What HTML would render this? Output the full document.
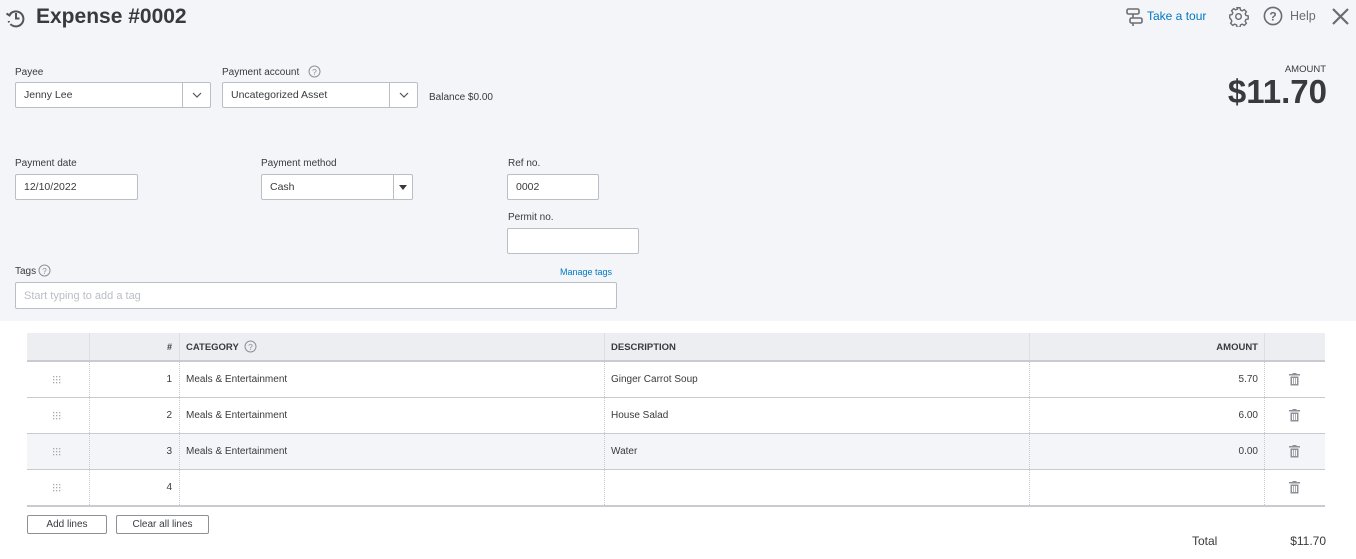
<!DOCTYPE html>
<html><head><style>
*{box-sizing:border-box;margin:0;padding:0}
body{width:1356px;height:559px;background:#fff;font-family:"Liberation Sans",Arial,sans-serif;color:#393a3d;position:relative;overflow:hidden}
.a{position:absolute}
.top{left:0;top:0;width:1356px;height:321px;background:#f4f5f8}
.lbl{font-size:10px;color:#393a3d}
.inp{background:#fff;border:1px solid #babec5;border-radius:2px;font-size:10.5px;padding-left:8px;display:flex;align-items:center}
.dd{position:absolute;right:0;top:0;bottom:0;width:28px;border-left:1px solid #babec5;display:flex;align-items:center;justify-content:center}
.cell{position:absolute;font-size:10px;color:#393a3d}
.vl{position:absolute;border-left:1px dotted #c8c8c8;top:361px;height:144px}
.hl{position:absolute;left:27px;width:1298px;border-top:1px solid #c8cbd0}
.btn{position:absolute;height:19px;border:1px solid #8d9096;border-radius:2px;font-size:10px;display:flex;align-items:center;justify-content:center;background:#fff}
</style></head><body>
<div class="a top"></div>
<svg class="a" style="left:5px;top:7px" width="22" height="22" viewBox="0 0 22 22" fill="none" stroke="#555" stroke-width="2"><path d="M4.5 8A7.5 7.5 0 1 1 7 18.3" /><path d="M7 18.3A7.5 7.5 0 0 1 3.6 14" stroke-dasharray="2 2"/><path d="M11 6v5.5h3.5"/><path d="M1.5 6.5l3 2 2-3"/></svg>
<div class="a" style="left:36px;top:5px;font-size:21px;font-weight:bold;color:#393a3d">Expense #0002</div>
<svg class="a" style="left:1126px;top:8px" width="18" height="18" viewBox="0 0 18 18" fill="none" stroke="#6b6c72" stroke-width="1.6"><rect x="1" y="1" width="12" height="5" rx="1.5"/><rect x="4" y="10" width="12" height="5" rx="1.5"/><path d="M7 6v4M7 15v3"/></svg>
<div class="a" style="left:1147px;top:9px;font-size:12px;color:#0077c5">Take a tour</div>
<svg class="a" style="left:1228px;top:6px" width="21" height="21" viewBox="0 0 24 24" fill="none" stroke="#6b6c72" stroke-width="1.6"><circle cx="12" cy="12" r="3.2"/><path d="M10.3 2h3.4l.6 2.6 2 .9 2.3-1.4 2.4 2.4-1.4 2.3.9 2 2.6.6v3.4l-2.6.6-.9 2 1.4 2.3-2.4 2.4-2.3-1.4-2 .9-.6 2.6h-3.4l-.6-2.6-2-.9-2.3 1.4-2.4-2.4 1.4-2.3-.9-2L2 13.7v-3.4l2.6-.6.9-2-1.4-2.3 2.4-2.4 2.3 1.4 2-.9z"/></svg>
<svg class="a" style="left:1263px;top:6px" width="20" height="20" viewBox="0 0 20 20"><circle cx="10" cy="10" r="8.6" fill="none" stroke="#6b6c72" stroke-width="1.6"/><text x="10" y="14.5" text-anchor="middle" font-size="12" font-weight="bold" fill="#6b6c72" font-family="Liberation Sans">?</text></svg>
<div class="a" style="left:1290px;top:9px;font-size:12.5px;color:#6b6c72">Help</div>
<svg class="a" style="left:1331px;top:7px" width="19" height="19" viewBox="0 0 19 19" stroke="#6b6c72" stroke-width="2.2"><path d="M2 2l15 15M17 2L2 17"/></svg>

<div class="a lbl" style="left:15px;top:67px">Payee</div>
<div class="a inp" style="left:15px;top:82px;width:196px;height:26px">Jenny Lee<div class="dd"><svg width="10" height="6"><path d="M1 1l4 4 4-4" fill="none" stroke="#555" stroke-width="1.2"/></svg></div></div>
<div class="a lbl" style="left:222px;top:67px">Payment account</div>
<svg class="a" style="left:308px;top:65px" width="13" height="13"><circle cx="6.5" cy="6.5" r="5.5" fill="none" stroke="#8d9096"/><text x="6.5" y="10" text-anchor="middle" font-size="8.5" fill="#8d9096" font-family="Liberation Sans">?</text></svg>
<div class="a inp" style="left:222px;top:82px;width:196px;height:26px">Uncategorized Asset<div class="dd"><svg width="10" height="6"><path d="M1 1l4 4 4-4" fill="none" stroke="#555" stroke-width="1.2"/></svg></div></div>
<div class="a lbl" style="left:429px;top:92px">Balance $0.00</div>
<div class="a" style="left:1260px;top:64px;width:66px;text-align:right;font-size:9.5px;color:#393a3d">AMOUNT</div>
<div class="a" style="left:1170px;top:73px;width:157px;text-align:right;font-size:33px;font-weight:bold;color:#393a3d">$11.70</div>

<div class="a lbl" style="left:15px;top:158px">Payment date</div>
<div class="a inp" style="left:15px;top:174px;width:123px;height:26px">12/10/2022</div>
<div class="a lbl" style="left:261px;top:158px">Payment method</div>
<div class="a inp" style="left:261px;top:174px;width:152px;height:26px">Cash<div class="dd" style="width:19px;border-right:none"><svg width="8" height="5"><path d="M0 0h8L4 5z" fill="#393a3d"/></svg></div></div>
<div class="a lbl" style="left:508px;top:158px">Ref no.</div>
<div class="a inp" style="left:507px;top:174px;width:92px;height:26px">0002</div>
<div class="a lbl" style="left:508px;top:212px">Permit no.</div>
<div class="a inp" style="left:507px;top:228px;width:132px;height:26px"></div>
<div class="a lbl" style="left:15px;top:266px">Tags</div>
<svg class="a" style="left:38px;top:264px" width="13" height="13"><circle cx="6.5" cy="6.5" r="5.5" fill="none" stroke="#8d9096"/><text x="6.5" y="10" text-anchor="middle" font-size="8.5" fill="#8d9096" font-family="Liberation Sans">?</text></svg>
<div class="a" style="left:560px;top:267px;font-size:9px;color:#0077c5">Manage tags</div>
<div class="a inp" style="left:15px;top:282px;width:602px;height:27px;color:#babec5;font-size:11px">Start typing to add a tag</div>

<div class="a" style="left:27px;top:333px;width:1298px;height:28px;background:#eceef1"></div>
<div class="a" style="left:89px;top:333px;height:28px;border-left:1px solid #dcdee2"></div>
<div class="a" style="left:179px;top:333px;height:28px;border-left:1px solid #dcdee2"></div>
<div class="a" style="left:604px;top:333px;height:28px;border-left:1px solid #dcdee2"></div>
<div class="a" style="left:1029px;top:333px;height:28px;border-left:1px solid #dcdee2"></div>
<div class="a" style="left:1264px;top:333px;height:28px;border-left:1px solid #dcdee2"></div>
<div class="cell" style="left:160px;top:342px;width:12px;text-align:right;font-weight:bold;font-size:9px">#</div>
<div class="cell" style="left:186px;top:342px;font-weight:bold;font-size:9.5px">CATEGORY</div>
<svg class="a" style="left:244px;top:340px" width="13" height="13"><circle cx="6.5" cy="6.5" r="5.5" fill="none" stroke="#8d9096"/><text x="6.5" y="10" text-anchor="middle" font-size="8.5" fill="#8d9096" font-family="Liberation Sans">?</text></svg>
<div class="cell" style="left:611px;top:342px;font-weight:bold;font-size:9.5px">DESCRIPTION</div>
<div class="cell" style="left:1150px;top:342px;width:108px;text-align:right;font-weight:bold;font-size:9.5px">AMOUNT</div>
<div class="a" style="left:27px;top:433px;width:1298px;height:36px;background:#f4f5f8"></div>
<div class="hl" style="top:360px;border-top:2px solid #c8cbd0"></div>
<div class="hl" style="top:397px"></div>
<div class="hl" style="top:433px"></div>
<div class="hl" style="top:469px"></div>
<div class="hl" style="top:505px;border-top:2px solid #c8cbd0"></div>
<div class="vl" style="left:89px"></div><div class="vl" style="left:179px"></div><div class="vl" style="left:604px"></div><div class="vl" style="left:1029px"></div><div class="vl" style="left:1264px"></div>

<svg class="a" style="left:53px;top:376px" width="8" height="116" fill="#aaa">
<g id="g"><rect x="0" y="0" width="1.3" height="1.3"/><rect x="3" y="0" width="1.3" height="1.3"/><rect x="6" y="0" width="1.3" height="1.3"/><rect x="0" y="3" width="1.3" height="1.3"/><rect x="3" y="3" width="1.3" height="1.3"/><rect x="6" y="3" width="1.3" height="1.3"/><rect x="0" y="6" width="1.3" height="1.3"/><rect x="3" y="6" width="1.3" height="1.3"/><rect x="6" y="6" width="1.3" height="1.3"/></g>
<use href="#g" y="36"/><use href="#g" y="72"/><use href="#g" y="108"/></svg>

<div class="cell" style="left:150px;top:374px;width:22px;text-align:right">1</div>
<div class="cell" style="left:186px;top:374px">Meals &amp; Entertainment</div>
<div class="cell" style="left:611px;top:374px">Ginger Carrot Soup</div>
<div class="cell" style="left:1150px;top:374px;width:108px;text-align:right">5.70</div>
<div class="cell" style="left:150px;top:410px;width:22px;text-align:right">2</div>
<div class="cell" style="left:186px;top:410px">Meals &amp; Entertainment</div>
<div class="cell" style="left:611px;top:410px">House Salad</div>
<div class="cell" style="left:1150px;top:410px;width:108px;text-align:right">6.00</div>
<div class="cell" style="left:150px;top:446px;width:22px;text-align:right">3</div>
<div class="cell" style="left:186px;top:446px">Meals &amp; Entertainment</div>
<div class="cell" style="left:611px;top:446px">Water</div>
<div class="cell" style="left:1150px;top:446px;width:108px;text-align:right">0.00</div>
<div class="cell" style="left:150px;top:482px;width:22px;text-align:right">4</div>

<svg class="a" style="left:1289px;top:373px" width="11" height="13" viewBox="0 0 11 13" fill="#8d9096"><rect x="0" y="1" width="11" height="1.5"/><rect x="3.5" y="0" width="4" height="1.5"/><path d="M1.5 3.5h8v9h-8zM3 5v6h1.2V5zM4.9 5v6h1.2V5zM6.8 5v6H8V5z" fill-rule="evenodd"/></svg>
<svg class="a" style="left:1289px;top:409px" width="11" height="13" viewBox="0 0 11 13" fill="#8d9096"><rect x="0" y="1" width="11" height="1.5"/><rect x="3.5" y="0" width="4" height="1.5"/><path d="M1.5 3.5h8v9h-8zM3 5v6h1.2V5zM4.9 5v6h1.2V5zM6.8 5v6H8V5z" fill-rule="evenodd"/></svg>
<svg class="a" style="left:1289px;top:445px" width="11" height="13" viewBox="0 0 11 13" fill="#8d9096"><rect x="0" y="1" width="11" height="1.5"/><rect x="3.5" y="0" width="4" height="1.5"/><path d="M1.5 3.5h8v9h-8zM3 5v6h1.2V5zM4.9 5v6h1.2V5zM6.8 5v6H8V5z" fill-rule="evenodd"/></svg>
<svg class="a" style="left:1289px;top:481px" width="11" height="13" viewBox="0 0 11 13" fill="#8d9096"><rect x="0" y="1" width="11" height="1.5"/><rect x="3.5" y="0" width="4" height="1.5"/><path d="M1.5 3.5h8v9h-8zM3 5v6h1.2V5zM4.9 5v6h1.2V5zM6.8 5v6H8V5z" fill-rule="evenodd"/></svg>

<div class="btn" style="left:27px;top:515px;width:80px">Add lines</div>
<div class="btn" style="left:116px;top:515px;width:93px">Clear all lines</div>
<div class="a" style="left:1192px;top:534px;font-size:12px">Total</div>
<div class="a" style="left:1250px;top:534px;width:76px;text-align:right;font-size:12px">$11.70</div>
</body></html>
